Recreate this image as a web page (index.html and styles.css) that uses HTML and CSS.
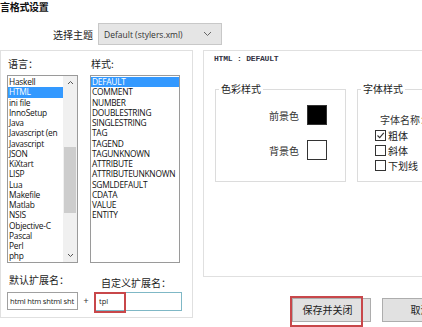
FILE: index.html
```html
<!DOCTYPE html>
<html>
<head>
<meta charset="utf-8">
<link rel="stylesheet" href="styles.css">
</head>
<body>
<div class="page">
  <div class="title">言格式设置</div>
  <div class="theme-row">
    <span class="theme-label">选择主题</span>
    <div class="select">
      <span class="select-text">Default (stylers.xml)</span>
      <svg class="chev" width="9" height="6" viewBox="0 0 9 6"><path d="M1 1 L4.5 4.5 L8 1" fill="none" stroke="#666" stroke-width="1"/></svg>
    </div>
  </div>
  <div class="main">
    <div class="left">
      <div class="cols">
        <div class="col col-lang">
          <div class="lbl">语言：</div>
          <div class="listbox lang">
            <div class="items">
              <div class="item">Haskell</div>
              <div class="item sel">HTML</div>
              <div class="item">ini file</div>
              <div class="item">InnoSetup</div>
              <div class="item">Java</div>
              <div class="item">Javascript (en</div>
              <div class="item">Javascript</div>
              <div class="item">JSON</div>
              <div class="item">KiXtart</div>
              <div class="item">LISP</div>
              <div class="item">Lua</div>
              <div class="item">Makefile</div>
              <div class="item">Matlab</div>
              <div class="item">NSIS</div>
              <div class="item">Objective-C</div>
              <div class="item">Pascal</div>
              <div class="item">Perl</div>
              <div class="item">php</div>
            </div>
            <div class="scroll">
              <svg class="arrow" width="7" height="5" viewBox="0 0 7 5"><path d="M1 4 L3.5 1.5 L6 4" fill="none" stroke="#555" stroke-width="1"/></svg>
              <div class="track"><div class="thumb"></div></div>
              <svg class="arrow" width="7" height="5" viewBox="0 0 7 5"><path d="M1 1 L3.5 3.5 L6 1" fill="none" stroke="#555" stroke-width="1"/></svg>
            </div>
          </div>
        </div>
        <div class="col col-style">
          <div class="lbl">样式:</div>
          <div class="listbox style">
            <div class="items">
              <div class="item sel">DEFAULT</div>
              <div class="item">COMMENT</div>
              <div class="item">NUMBER</div>
              <div class="item">DOUBLESTRING</div>
              <div class="item">SINGLESTRING</div>
              <div class="item">TAG</div>
              <div class="item">TAGEND</div>
              <div class="item">TAGUNKNOWN</div>
              <div class="item">ATTRIBUTE</div>
              <div class="item">ATTRIBUTEUNKNOWN</div>
              <div class="item">SGMLDEFAULT</div>
              <div class="item">CDATA</div>
              <div class="item">VALUE</div>
              <div class="item">ENTITY</div>
            </div>
          </div>
        </div>
      </div>
      <div class="ext-labels">
        <span class="ext-lbl1">默认扩展名：</span>
        <span class="ext-lbl2">自定义扩展名：</span>
      </div>
      <div class="ext-row">
        <div class="input in1">html htm shtml sht</div>
        <span class="plus">+</span>
        <div class="input in2"><span>tpl</span><div class="mark mark-tpl"></div></div>
      </div>
    </div>
    <div class="right-col">
      <div class="right">
        <div class="rhead">HTML : DEFAULT</div>
        <div class="groups">
          <fieldset class="grp grp-color">
            <legend>色彩样式</legend>
            <div class="color-grid">
              <span class="clbl">前景色</span><div class="swatch black"></div>
              <span class="clbl">背景色</span><div class="swatch white"></div>
            </div>
          </fieldset>
          <fieldset class="grp grp-font">
            <legend>字体样式</legend>
            <div class="fname">字体名称：</div>
            <div class="checks">
              <div class="chk"><span class="box"><svg width="9" height="9" viewBox="0 0 9 9"><path d="M1.5 4.5 L3.7 6.7 L7.8 1.8" fill="none" stroke="#333" stroke-width="1.1"/></svg></span>粗体</div>
              <div class="chk"><span class="box"></span>斜体</div>
              <div class="chk"><span class="box"></span>下划线</div>
            </div>
          </fieldset>
        </div>
      </div>
      <div class="buttons">
        <div class="btn save">保存并关闭<div class="mark mark-save"></div></div>
        <div class="btn cancel">取消</div>
      </div>
    </div>
  </div>
</div>
</body>
</html>
```

FILE: styles.css
```css
html, body {
  margin: 0;
  padding: 0;
  background: #fff;
  overflow: hidden;
}
body {
  width: 422px;
  height: 327px;
  font-family: "Noto Sans CJK SC", "Noto Sans", sans-serif;
  color: #222;
}
.page {
  display: flex;
  flex-direction: column;
  width: 422px;
  height: 327px;
  overflow: hidden;
}
.title {
  height: 13px;
  font-size: 10px;
  line-height: 14px;
  color: #111;
  font-weight: bold;
  letter-spacing: -0.3px;
  white-space: nowrap;
}
.theme-row {
  display: flex;
  align-items: center;
  margin-top: 10px;
  height: 22px;
  padding-left: 53px;
}
.theme-label {
  font-size: 10px;
  width: 45px;
  color: #222;
}
.select {
  width: 124px;
  height: 22px;
  box-sizing: border-box;
  background: #e5e5e5;
  border: 1px solid #c8c8c8;
  display: flex;
  align-items: center;
  justify-content: space-between;
  padding: 0 9px 0 5px;
}
.select-text {
  font-family: "Open Sans", "Noto Sans", sans-serif;
  font-size: 8.5px;
  color: #333;
}
.main {
  display: flex;
  margin-top: 5px;
  gap: 10px;
  align-items: flex-start;
}
.left {
  width: 193px;
  height: 268px;
  box-sizing: border-box;
  border: 1px solid #e0e0e0;
  padding: 6px 0 0 6px;
  display: flex;
  flex-direction: column;
  flex: none;
}
.cols {
  display: flex;
  gap: 12px;
}
.col {
  display: flex;
  flex-direction: column;
}
.lbl {
  font-size: 10px;
  line-height: 14px;
  height: 14px;
  margin-bottom: 4px;
  padding-left: 1px;
}
.listbox {
  height: 188px;
  box-sizing: border-box;
  border: 1px solid #9a9a9a;
  background: #fff;
  display: flex;
  overflow: hidden;
}
.lang { width: 71px; }
.style { width: 90px; }
.items {
  flex: 1;
  padding-top: 1px;
  overflow: hidden;
  min-width: 0;
}
.item {
  font-family: "Open Sans", "Noto Sans", sans-serif;
  font-size: 8.4px;
  line-height: 10.25px;
  height: 10.25px;
  padding-left: 1px;
  white-space: nowrap;
  color: #111;
  letter-spacing: -0.25px;
}
.item.sel {
  background: #3399ff;
  color: #fff;
}
.scroll {
  width: 14px;
  background: #f0f0f0;
  display: flex;
  flex-direction: column;
  align-items: center;
  padding: 4px 0;
  box-sizing: border-box;
}
.arrow { flex: none; }
.track {
  flex: 1;
  width: 12px;
  display: flex;
  flex-direction: column;
  padding-top: 62px;
}
.thumb {
  width: 12px;
  height: 66px;
  background: #cdcdcd;
}
.ext-labels {
  display: flex;
  margin-top: 10px;
  height: 16px;
  font-size: 10px;
  line-height: 14px;
  padding-left: 2px;
}
.ext-lbl1 { width: 92px; }
.ext-lbl2 { padding-top: 3px; }
.ext-row {
  display: flex;
  align-items: flex-start;
  margin-top: 3px;
}
.input {
  height: 18px;
  box-sizing: border-box;
  border: 1px solid #a0a0a0;
  font-family: "Open Sans", "Noto Sans", sans-serif;
  font-size: 7.6px;
  line-height: 16px;
  padding-left: 2px;
  white-space: nowrap;
  overflow: hidden;
  color: #222;
}
.in1 { width: 71px; letter-spacing: -0.2px; }
.plus {
  width: 16px;
  text-align: center;
  font-size: 9px;
  line-height: 18px;
  color: #333;
}
.in2 {
  width: 88px;
  height: 19px;
  border-color: #7fb8c6;
  position: relative;
  overflow: visible;
  padding-left: 4px;
}
.mark {
  position: absolute;
  border: 2px solid #c8474a;
  box-sizing: border-box;
}
.mark-tpl {
  left: -1px;
  top: -1px;
  width: 32px;
  height: 21px;
}
.right-col {
  display: flex;
  flex-direction: column;
  flex: none;
  width: 240px;
}
.right {
  width: 240px;
  height: 227px;
  box-sizing: border-box;
  border: 1px solid #e0e0e0;
  padding: 0 0 0 11px;
  overflow: hidden;
}
.rhead {
  font-family: "Liberation Mono", monospace;
  font-size: 8px;
  line-height: 16px;
  height: 16px;
  color: #334;
  margin-left: -1px;
  font-weight: bold;
  letter-spacing: -0.2px;
}
.groups {
  display: flex;
  gap: 11px;
  margin-top: 16px;
}
.grp {
  margin: 0;
  padding: 0;
  min-width: 0;
  border: 1px solid #dcdcdc;
  height: 99px;
  box-sizing: border-box;
  flex: none;
}
.grp legend {
  font-size: 10px;
  line-height: 12px;
  padding: 0 2px;
  margin-left: 3px;
  color: #222;
}
.grp-color { width: 131px; }
.grp-font { width: 80px; }
.color-grid {
  display: grid;
  grid-template-columns: 83px 20px;
  grid-template-rows: 20px 20px;
  row-gap: 15px;
  column-gap: 8px;
  padding-top: 10px;
  align-items: center;
}
.clbl {
  font-size: 10px;
  text-align: right;
  color: #333;
}
.swatch {
  width: 20px;
  height: 20px;
  box-sizing: border-box;
  border: 1px solid #333;
}
.black { background: #000; }
.white { background: #fff; }
.fname {
  font-size: 10px;
  line-height: 12px;
  padding: 19px 0 0 22px;
  color: #333;
  white-space: nowrap;
}
.checks {
  display: flex;
  flex-direction: column;
  padding: 2px 0 0 17px;
}
.chk {
  display: flex;
  align-items: center;
  height: 15px;
  font-size: 10px;
  color: #222;
  white-space: nowrap;
}
.box {
  width: 11px;
  height: 11px;
  box-sizing: border-box;
  border: 1px solid #333;
  background: #fff;
  margin-right: 2px;
  display: flex;
  align-items: center;
  justify-content: center;
}
.buttons {
  display: flex;
  gap: 11px;
  margin-top: 21px;
  padding-left: 89px;
}
.btn {
  height: 24px;
  box-sizing: border-box;
  background: #e1e1e1;
  border: 1px solid #adadad;
  font-size: 10px;
  line-height: 22px;
  text-align: center;
  color: #222;
  flex: none;
  position: relative;
  white-space: nowrap;
}
.save { width: 79px; padding-right: 8px; }
.cancel { width: 77px; }
.mark-save {
  left: -3px;
  top: -3px;
  width: 73px;
  height: 31px;
}
```
